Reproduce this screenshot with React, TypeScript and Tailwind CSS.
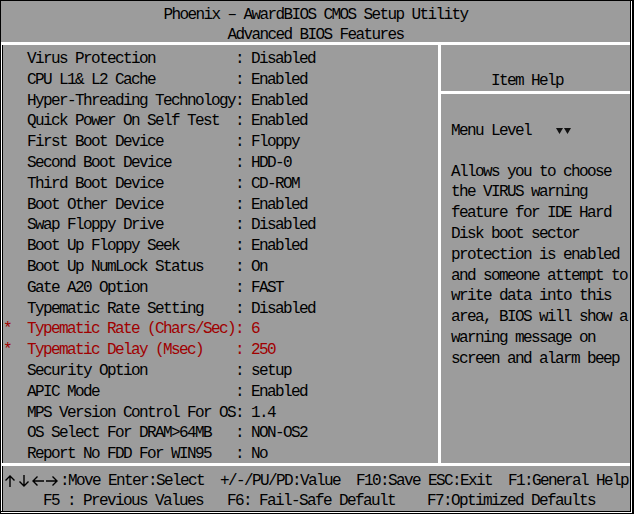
type Row = { label: string; value: string; hot?: boolean };

const rows: Row[] = [
  { label: 'Virus Protection', value: 'Disabled' },
  { label: 'CPU L1& L2 Cache', value: 'Enabled' },
  { label: 'Hyper-Threading Technology', value: 'Enabled' },
  { label: 'Quick Power On Self Test', value: 'Enabled' },
  { label: 'First Boot Device', value: 'Floppy' },
  { label: 'Second Boot Device', value: 'HDD-0' },
  { label: 'Third Boot Device', value: 'CD-ROM' },
  { label: 'Boot Other Device', value: 'Enabled' },
  { label: 'Swap Floppy Drive', value: 'Disabled' },
  { label: 'Boot Up Floppy Seek', value: 'Enabled' },
  { label: 'Boot Up NumLock Status', value: 'On' },
  { label: 'Gate A20 Option', value: 'FAST' },
  { label: 'Typematic Rate Setting', value: 'Disabled' },
  { label: 'Typematic Rate (Chars/Sec)', value: '6', hot: true },
  { label: 'Typematic Delay (Msec)', value: '250', hot: true },
  { label: 'Security Option', value: 'setup' },
  { label: 'APIC Mode', value: 'Enabled' },
  { label: 'MPS Version Control For OS', value: '1.4' },
  { label: 'OS Select For DRAM>64MB', value: 'NON-OS2' },
  { label: 'Report No FDD For WIN95', value: 'No' },
];

const help = [
  'Allows you to choose',
  'the VIRUS warning',
  'feature for IDE Hard',
  'Disk boot sector',
  'protection is enabled',
  'and someone attempt to',
  'write data into this',
  'area, BIOS will show a',
  'warning message on',
  'screen and alarm beep',
];

// arrow keys hint, drawn so each sits in a 14px cell like the reference
const arrowPaths = [
  'M7 14V3M2.5 7.5 7 3l4.5 4.5',
  'M7 2v11M2.5 8.5 7 13l4.5-4.5',
  'M13 8H2M6.5 3.5 2 8l4.5 4.5',
  'M1 8h11M7.5 3.5 12 8l-4.5 4.5',
];

const Arrows = () => (
  <span className="inline-flex w-[57px]">
    {arrowPaths.map((d) => (
      <svg key={d} width="14" height="16" viewBox="0 0 14 16" className="block">
        <path d={d} fill="none" stroke="#000" strokeWidth="1.4" />
      </svg>
    ))}
  </span>
);

const LevelMark = () => (
  <svg width="18" height="8" viewBox="0 0 18 8" className="inline-block align-middle">
    <path d="M1 1h7L4.5 7z" fill="#111" />
    <path d="M9 1h7l-3.5 6z" fill="#111" />
  </svg>
);

export default function App() {
  return (
    <div className="h-[514px] w-[634px] bg-[#9c9c9c] font-['Liberation_Mono',monospace] text-[16px] tracking-[-1.6px] text-black">
      <div className="flex h-full flex-col border-t border-r-2 border-b border-l border-black">
        <div className="flex flex-1 flex-col border-r border-b border-white">
          <div className="flex flex-1 flex-col border-r border-b border-black">
            <div className="h-[41px] pt-[4px] text-center leading-[20px] whitespace-pre">
              <div>Phoenix – AwardBIOS CMOS Setup Utility</div>
              <div>Advanced BIOS Features</div>
            </div>
            <div className="h-[3px] bg-white" />

            <div className="flex h-[418px]">
              <div className="w-[437px] border-l border-white">
                <div className="h-full border-l border-black pt-[4px] leading-[20.8px] whitespace-pre">
                  {rows.map((r) => (
                    <div key={r.label} className={r.hot ? 'text-[#a00000]' : ''}>
                      {(r.hot ? '*' : ' ') + '  ' + r.label.padEnd(26) + ': ' + r.value}
                    </div>
                  ))}
                </div>
              </div>
              <div className="w-[3px] bg-white" />
              <div className="flex flex-1 flex-col">
                <div className="h-[46px] pt-[26px] pl-[50px] leading-[20px]">Item Help</div>
                <div className="h-[3px] bg-white" />
                <div className="pt-[27px] pl-[10px] leading-[20.8px] whitespace-pre">
                  <div>
                    Menu Level   <LevelMark />
                  </div>
                  <div className="mt-[19.8px]">
                    {help.map((h) => (
                      <div key={h}>{h}</div>
                    ))}
                  </div>
                </div>
              </div>
            </div>

            <div className="h-[3px] bg-white" />
            <div className="flex-1 border-l border-white">
              <div className="h-full border-l border-black pt-[5px] leading-[20px] whitespace-pre">
                <div className="flex h-[20px] items-center">
                  <Arrows />
                  <span>:Move Enter:Select  +/-/PU/PD:Value  F10:Save ESC:Exit  F1:General Help</span>
                </div>
                <div>     F5 : Previous Values   F6: Fail-Safe Default    F7:Optimized Defaults</div>
              </div>
            </div>
          </div>
        </div>
      </div>
    </div>
  );
}
